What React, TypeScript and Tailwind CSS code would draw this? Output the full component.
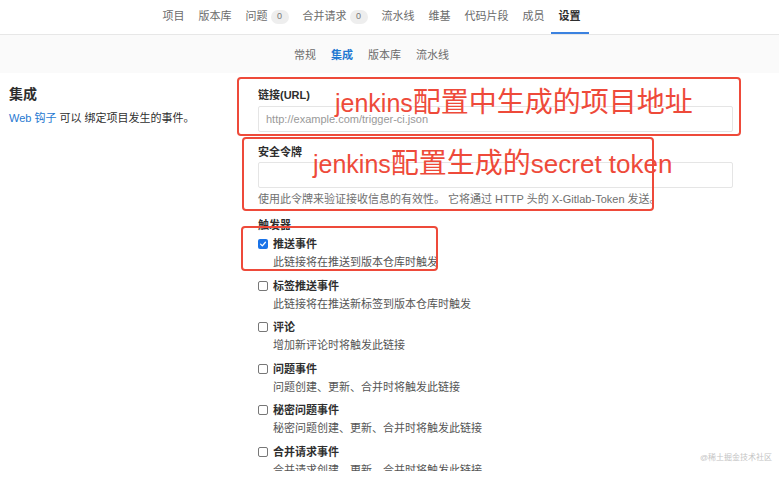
const tabs = [
  { label: "项目" },
  { label: "版本库" },
  { label: "问题", badge: "0" },
  { label: "合并请求", badge: "0" },
  { label: "流水线" },
  { label: "维基" },
  { label: "代码片段" },
  { label: "成员" },
  { label: "设置", active: true },
];

const subTabs = [
  { label: "常规" },
  { label: "集成", active: true },
  { label: "版本库" },
  { label: "流水线" },
];

const triggers = [
  { title: "推送事件", desc: "此链接将在推送到版本仓库时触发", checked: true },
  { title: "标签推送事件", desc: "此链接将在推送新标签到版本仓库时触发" },
  { title: "评论", desc: "增加新评论时将触发此链接" },
  { title: "问题事件", desc: "问题创建、更新、合并时将触发此链接" },
  { title: "秘密问题事件", desc: "秘密问题创建、更新、合并时将触发此链接" },
  { title: "合并请求事件", desc: "合并请求创建、更新、合并时将触发此链接" },
];

const Checkbox = ({ checked }: { checked?: boolean }) =>
  checked ? (
    <span className="flex h-[10px] w-[10px] items-center justify-center rounded-[2px] bg-[#1a73e8]">
      <svg viewBox="0 0 10 10" className="h-[8px] w-[8px]">
        <path d="M2 5.2 L4.2 7.3 L8 2.8" fill="none" stroke="white" strokeWidth="1.6" strokeLinecap="round" strokeLinejoin="round" />
      </svg>
    </span>
  ) : (
    <span className="h-[10px] w-[10px] rounded-[2px] border border-[#777] bg-white" />
  );

// red hand-written notes laid over the screenshot
const Note = ({ parts }: { parts: { t: string; cls: string }[] }) => (
  <span className="whitespace-nowrap leading-none text-[#ee4a3a]">
    {parts.map((p, i) => (
      <span key={i} className={p.cls}>
        {p.t}
      </span>
    ))}
  </span>
);

export default function App() {
  return (
    <div className="relative h-[490px] w-[779px] overflow-hidden bg-white font-['Liberation_Sans','Noto_Sans_CJK_SC',sans-serif] text-[11px] text-[#2e2e2e]">
      {/* main nav */}
      <div className="flex h-[35px] items-stretch justify-center gap-[14px] border-b border-[#e7e7e7] pr-[36px]">
        {tabs.map((t) => (
          <div
            key={t.label}
            className={
              t.active
                ? "-mx-2 flex items-center border-b-2 border-[#3b82e0] px-2 pt-[1px] font-bold text-[#2e2e2e]"
                : "flex items-center pb-[1px] text-[#6b6b6b]"
            }
          >
            {t.label}
            {t.badge && (
              <span className="ml-[3px] flex h-[14px] w-[18px] items-center justify-center rounded-full bg-[#eeeeee] text-[9px] text-[#777]">
                {t.badge}
              </span>
            )}
          </div>
        ))}
      </div>

      {/* sub nav */}
      <div className="flex h-[38px] items-center justify-center gap-[15px] bg-[#fafafa] pr-[36px] pt-[3px]">
        {subTabs.map((t) => (
          <span key={t.label} className={t.active ? "font-bold text-[#1f78d1]" : "text-[#6b6b6b]"}>
            {t.label}
          </span>
        ))}
      </div>

      {/* content */}
      <div className="flex h-[398px] overflow-hidden">
        <div className="w-[258px] pl-[9px] pt-[13px]">
          <div className="text-[14px] font-bold leading-[16px] text-[#2e2e2e]">集成</div>
          <div className="mt-[9px] leading-[14px] text-[#2e2e2e]">
            <span className="text-[#1f78d1]">Web 钩子</span> 可以 绑定项目发生的事件。
          </div>
        </div>

        <div className="w-[475px] pt-[15px]">
          <div className="font-bold leading-[14px]">链接(URL)</div>
          <div className="mt-[4px] flex h-[26px] items-center rounded-[2px] border border-[#e5e5e5] px-[7px] text-[#999]">
            http://example.com/trigger-ci.json
          </div>

          <div className="mt-[13px] font-bold leading-[14px]">安全令牌</div>
          <div className="mt-[3px] h-[26px] rounded-[2px] border border-[#e5e5e5]" />
          <div className="mt-[4px] leading-[14px] text-[#707070]">
            使用此令牌来验证接收信息的有效性。 它将通过 HTTP 头的 X-Gitlab-Token 发送。
          </div>

          <div className="mt-[12px] font-bold leading-[14px]">触发器</div>

          <div className="mt-[5px] flex flex-col gap-[9.6px]">
            {triggers.map((t) => (
              <div key={t.title}>
                <div className="flex items-center gap-[5px] leading-[14px]">
                  <Checkbox checked={t.checked} />
                  <span className="font-bold">{t.title}</span>
                </div>
                <div className="mt-[4px] pl-[15px] leading-[14px] text-[#555]">{t.desc}</div>
              </div>
            ))}
          </div>
        </div>
      </div>

      {/* annotations */}
      <div className="absolute left-[237px] top-[77px] h-[59px] w-[504px] rounded-[4px] border-2 border-[#ee4a3a]" />
      <div className="absolute left-[335px] top-[89px]">
        <Note
          parts={[
            { t: "jenkins", cls: "text-[25px]" },
            { t: "配置中生成的项目地址", cls: "text-[28px]" },
          ]}
        />
      </div>

      <div className="absolute left-[242px] top-[137px] h-[74px] w-[412px] rounded-[4px] border-2 border-[#ee4a3a]" />
      <div className="absolute left-[313px] top-[150px]">
        <Note
          parts={[
            { t: "jenkins", cls: "text-[25px]" },
            { t: "配置生成的", cls: "text-[28px]" },
            { t: "secret token", cls: "text-[26px]" },
          ]}
        />
      </div>

      <div className="absolute left-[241px] top-[226px] h-[45px] w-[197px] rounded-[4px] border-2 border-[#ee4a3a]" />

      <div className="absolute left-[700px] top-[452px] text-[8px] text-[#c4c4c4]">@稀土掘金技术社区</div>
    </div>
  );
}
